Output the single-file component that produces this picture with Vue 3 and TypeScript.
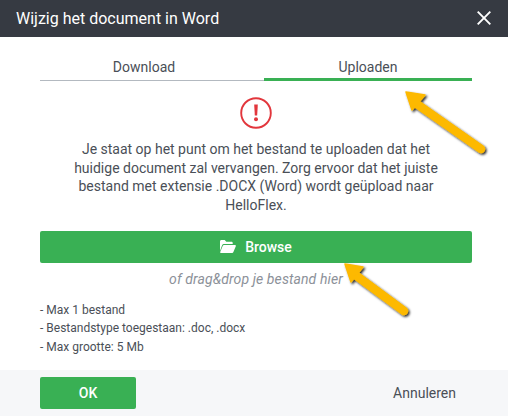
<script setup lang="ts">
const tabs = [
  { name: "Download", active: false },
  { name: "Uploaden", active: true },
];

const rules = [
  "- Max 1 bestand",
  "- Bestandstype toegestaan: .doc, .docx",
  "- Max grootte: 5 Mb",
];
</script>

<template>
  <div class="dialog">
    <header class="dialog-header">
      <h1>Wijzig het document in Word</h1>
      <button class="close" aria-label="Sluiten">
        <svg width="14" height="14" viewBox="0 0 14 14">
          <path d="M.7.7L13.3 13.3M13.3.7L.7 13.3" stroke="#fff" stroke-width="1.9" fill="none" />
        </svg>
      </button>
    </header>

    <main class="dialog-body">
      <nav class="tabs">
        <div v-for="tab in tabs" :key="tab.name" class="tab" :class="{ active: tab.active }">
          {{ tab.name }}
        </div>
      </nav>

      <svg class="alert" width="32" height="32" viewBox="0 0 32 32">
        <circle cx="16" cy="16" r="14.8" fill="none" stroke="#e2363c" stroke-width="1.9" />
        <path d="M14.2 7.5h3.6l-.6 11h-2.4z" fill="#e2363c" />
        <circle cx="16" cy="22.3" r="2" fill="#e2363c" />
      </svg>

      <p class="message">
        Je staat op het punt om het bestand te uploaden dat het<br />
        huidige document zal vervangen. Zorg ervoor dat het juiste<br />
        bestand met extensie .DOCX (Word) wordt geüpload naar<br />
        HelloFlex.
      </p>

      <button class="browse">
        <svg width="16" height="13" viewBox="0 0 16 13">
          <path d="M0 11V1.4C0 .7.6 0 1.3 0h3.4l1.6 1.7h5.2c.7 0 1.2.5 1.2 1.2V4H4.2C3.2 4 2.5 4.5 2.1 5.3z" fill="#fff" />
          <path d="M4 5h11c.7 0 1.1.6.8 1.2l-2.4 5.8c-.2.6-.7 1-1.3 1H.9c-.6 0-1-.6-.7-1.1L2.8 5.8C3 5.3 3.5 5 4 5z" fill="#fff" />
        </svg>
        Browse
      </button>
      <p class="drop-hint">of drag&amp;drop je bestand hier</p>

      <ul class="rules">
        <li v-for="rule in rules" :key="rule">{{ rule }}</li>
      </ul>
    </main>

    <footer class="dialog-footer">
      <button class="ok">OK</button>
      <button class="cancel">Annuleren</button>
    </footer>

    <!-- callout arrows drawn over the screenshot -->
    <svg class="arrows" width="508" height="416" viewBox="0 0 508 416">
      <defs>
        <filter id="arrow-shadow" x="-20%" y="-20%" width="150%" height="150%">
          <feDropShadow dx="1.5" dy="1.5" stdDeviation="1" flood-color="#000" flood-opacity="0.85" />
        </filter>
      </defs>
      <g filter="url(#arrow-shadow)" fill="#fdb900" stroke="#fdb900" stroke-linejoin="round">
        <path d="M414 102L481 149" stroke-width="8.5" stroke-linecap="round" fill="none" />
        <path d="M406 92L425 95L412 110z" stroke-width="1.5" />
        <path d="M354 274L404 311" stroke-width="8.5" stroke-linecap="round" fill="none" />
        <path d="M345 264L363 267L351 282z" stroke-width="1.5" />
      </g>
    </svg>
  </div>
</template>

<style>
html,
body {
  margin: 0;
  background: #fff;
}
</style>

<style scoped>
.dialog {
  position: relative;
  width: 508px;
  height: 416px;
  display: flex;
  flex-direction: column;
  overflow: hidden;
  font-family: Roboto, "Liberation Sans", sans-serif;
  color: #4a4f57;
  background: #fff;
}

.dialog-header {
  height: 37px;
  flex: none;
  box-sizing: border-box;
  display: flex;
  align-items: center;
  justify-content: space-between;
  padding: 0 17px 1px 16px;
  background: #363a42;
}

.dialog-header h1 {
  margin: 0;
  font-size: 16px;
  font-weight: 400;
  color: #fff;
}

.close {
  display: flex;
  padding: 0;
  margin: 0;
  border: none;
  background: none;
}

.dialog-body {
  flex: 1;
  display: flex;
  flex-direction: column;
  align-items: center;
  padding: 14px 36px 0 40px;
}

.tabs {
  display: flex;
  width: 100%;
  height: 30px;
  flex: none;
}

.tab {
  flex: none;
  width: 208px;
  box-sizing: border-box;
  height: 30px;
  padding-top: 7px;
  text-align: center;
  font-size: 14px;
  line-height: 18px;
  border-bottom: 1px solid #b3b9c0;
}

.tab:first-child {
  width: 224px;
  padding-right: 16px;
}

.tab.active {
  border-bottom: 3px solid #39b054;
}

.alert {
  flex: none;
  margin-top: 16px;
}

.message {
  margin: 11px 0 0;
  width: 100%;
  text-align: center;
  font-size: 14px;
  line-height: 18.67px;
}

.browse {
  flex: none;
  width: 100%;
  height: 32px;
  margin-top: 16px;
  display: flex;
  align-items: center;
  justify-content: center;
  gap: 9px;
  padding: 0;
  border: none;
  border-radius: 2px;
  background: #39b054;
  color: #fff;
  font: 500 14px Roboto, "Liberation Sans", sans-serif;
}

.drop-hint {
  margin: 7px 0 0;
  font-size: 14px;
  line-height: 18px;
  letter-spacing: 0.1px;
  font-style: italic;
  color: #8c9199;
}

.rules {
  list-style: none;
  align-self: stretch;
  margin: 13px 0 0;
  padding: 0;
  font-size: 12px;
  line-height: 18.4px;
}

.dialog-footer {
  height: 46px;
  flex: none;
  box-sizing: border-box;
  display: flex;
  align-items: center;
  justify-content: space-between;
  padding: 0 52px 0 40px;
  background: #f6f7f9;
}

.ok {
  width: 96px;
  height: 32px;
  padding: 0;
  border: none;
  border-radius: 2px;
  background: #39b054;
  color: #fff;
  font: 500 14px Roboto, "Liberation Sans", sans-serif;
}

.cancel {
  padding: 0;
  border: none;
  background: none;
  color: #4a4f57;
  font: 400 14px Roboto, "Liberation Sans", sans-serif;
}

.arrows {
  position: absolute;
  inset: 0;
  pointer-events: none;
}
</style>
